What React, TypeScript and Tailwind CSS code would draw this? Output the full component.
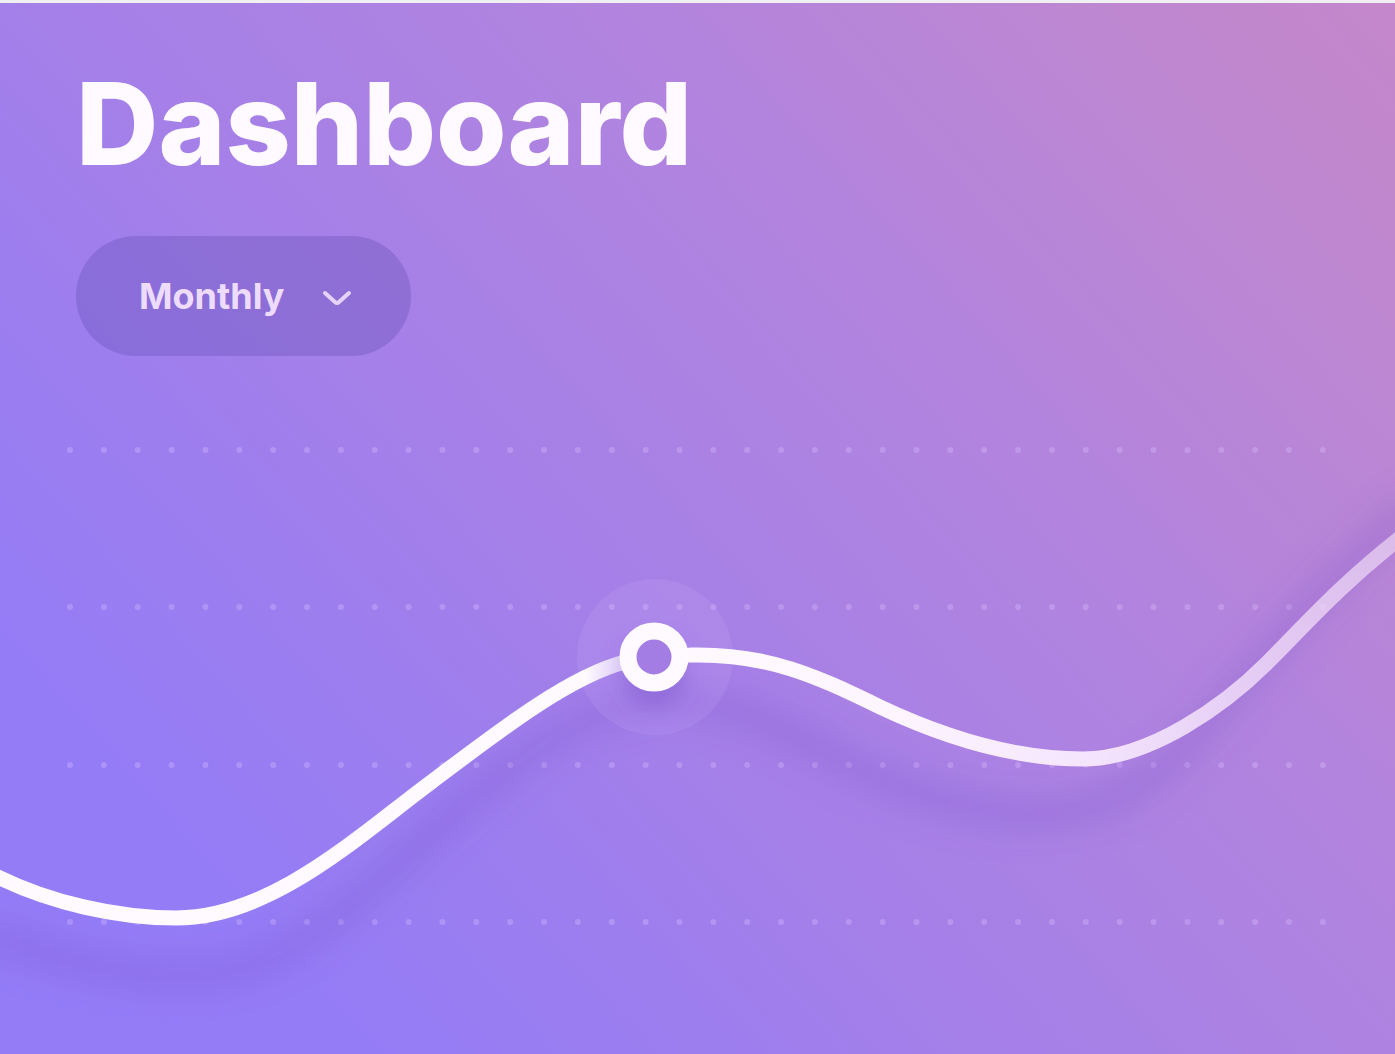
import React from "react";

const GRID_LINES = [94, 251, 409, 566];

const LINE_PATH =
  "M-10 517 C50 548 120 562 176 562 C270 562 355 483 430 427 C500 374 570 320 625 306 C648 299 670 299 690 299 C770 297 820 322 880 351 C950 384 1020 403 1083 403 C1150 403 1225 349 1267 307 C1310 264 1340 229 1405 178";

const SHADOW_PATH =
  "M-20 575 C60 605 120 620 190 620 C290 620 370 530 440 470 C510 410 570 355 650 347 C740 338 800 385 870 418 C940 448 990 458 1040 458 C1150 458 1200 370 1260 307 C1310 250 1340 215 1415 150";

function TrendChart() {
  return (
    <svg
      className="block w-full overflow-visible"
      viewBox="0 0 1395 698"
      role="img"
      aria-label="Monthly trend"
      fill="none"
    >
      <defs>
        <linearGradient id="line-fade" gradientUnits="userSpaceOnUse" x1="0" y1="0" x2="1395" y2="0">
          <stop offset="0" stopColor="#fffaff" />
          <stop offset="0.42" stopColor="#fffaff" />
          <stop offset="0.445" stopColor="#fffaff" stopOpacity="0.6" />
          <stop offset="0.47" stopColor="#fffaff" />
          <stop offset="0.64" stopColor="#fdf5ff" />
          <stop offset="0.78" stopColor="#f8eaff" stopOpacity="0.95" />
          <stop offset="0.9" stopColor="#f8e6fc" stopOpacity="0.76" />
          <stop offset="1" stopColor="#f8e4fa" stopOpacity="0.6" />
        </linearGradient>
        <filter id="line-blur" filterUnits="userSpaceOnUse" x="-60" y="0" width="1520" height="760">
          <feGaussianBlur stdDeviation="16" />
        </filter>
        <filter id="node-blur" filterUnits="userSpaceOnUse" x="560" y="220" width="200" height="220">
          <feGaussianBlur stdDeviation="12" />
        </filter>
      </defs>

      {GRID_LINES.map((y) => (
        <line
          key={y}
          x1="70"
          x2="1324"
          y1={y}
          y2={y}
          stroke="#dcc4ff"
          strokeOpacity="0.32"
          strokeWidth="6"
          strokeLinecap="round"
          strokeDasharray="0 33.86"
        />
      ))}

      <path d={SHADOW_PATH} stroke="#7350c8" strokeOpacity="0.25" strokeWidth="32" filter="url(#line-blur)" />
      <circle cx="655" cy="301" r="78" fill="#e0c8ff" fillOpacity="0.12" />
      <circle cx="654" cy="320" r="32" fill="#7048c8" fillOpacity="0.4" filter="url(#node-blur)" />
      <path d={LINE_PATH} stroke="url(#line-fade)" strokeWidth="15" />
      <circle cx="654" cy="301" r="26" fill="#a47de4" stroke="#fffaff" strokeWidth="17" />
    </svg>
  );
}

export default function App() {
  return (
    <main className="flex min-h-screen flex-col overflow-hidden border-t-3 border-[#f0f0f2] bg-[linear-gradient(48deg,#937cf6_0%,#947cf6_16%,#a680e7_45%,#b284de_67%,#be87d0_88%,#c487ca_100%)] font-['Inter',sans-serif] text-[#fffaff]">
      <header className="flex flex-col items-start px-[76px] pt-[61px]">
        <h1 className="text-[114px] leading-[120px] font-extrabold">Dashboard</h1>
        <div className="relative mt-13">
          <select
            aria-label="Period"
            defaultValue="monthly"
            className="h-[120px] w-[335px] appearance-none rounded-full bg-[#4a3da0]/25 pr-24 pl-[63px] text-[36px] font-bold text-[#eedcff] outline-none"
          >
            <option value="monthly">Monthly</option>
          </select>
          <svg
            className="pointer-events-none absolute top-[52px] right-[58px] h-5 w-8"
            viewBox="0 0 32 20"
            fill="none"
            aria-hidden="true"
          >
            <path d="M4 5 L14 14 Q16 16 18 14 L28 5" stroke="#e6d2fa" strokeWidth="4" strokeLinecap="round" />
          </svg>
        </div>
      </header>
      <TrendChart />
    </main>
  );
}
